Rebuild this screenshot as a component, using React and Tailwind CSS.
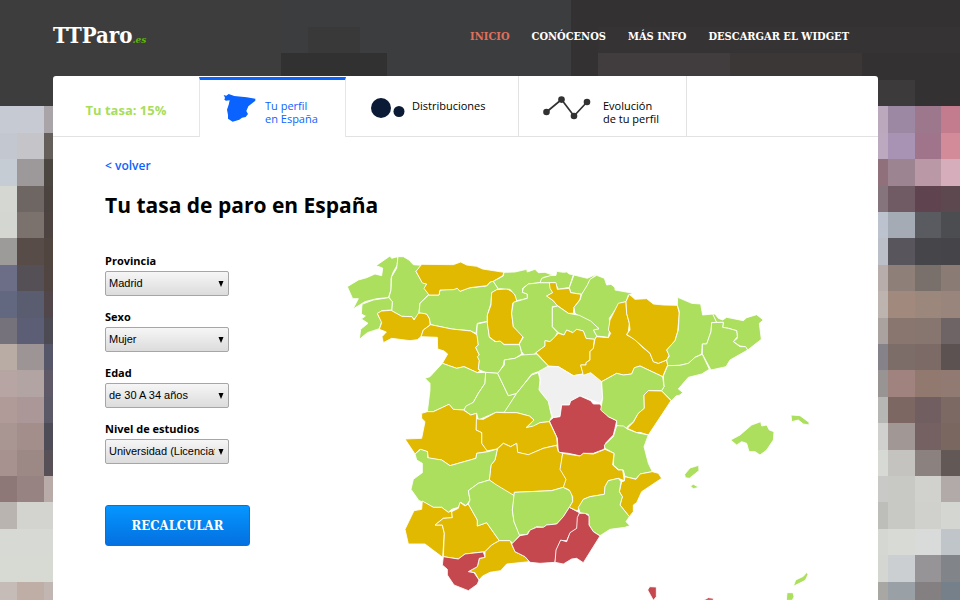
import React from "react";

const GREEN = "#acdf5d";
const GOLD = "#e1b900";
const RED = "#c6484f";
const WHITE = "#f0f0f0";

// Mosaic backdrop: one row of tiles per entry, left to right.
const COLUMNS = [
  [-10, 27],
  [17, 26.5],
  [43.5, 420],
  [460, 428],
  [888, 26.5],
  [914.5, 26.5],
  [941, 27],
];
const MOSAIC = [
  ["#c6cad2", "#c7cad2", "#a8a4a8", "#bba8bd", "#9c88a2", "#9d788c", "#c27c8e"],
  ["#c3c7d0", "#c4c4c9", "#655f5b", "#bca9bf", "#a893b4", "#a0758b", "#d38b9a"],
  ["#c5ccd4", "#9d999a", "#4c4641", "#8f707b", "#9c8491", "#bb98a6", "#d6adba"],
  ["#d5d7d3", "#6e6663", "#4a4340", "#86747d", "#705a63", "#5f444f", "#5d4850"],
  ["#d4d6d2", "#7c726d", "#4d4441", "#bcc3ce", "#a5abb5", "#5a5b61", "#4b4d51"],
  ["#9d9b9a", "#574c47", "#50453f", "#bbbfc8", "#58565c", "#464549", "#454549"],
  ["#6b6e86", "#555056", "#504540", "#b7aeab", "#8e7f78", "#79706b", "#8b7b75"],
  ["#626880", "#5a5c70", "#51464a", "#bdb4b0", "#a1897d", "#9c877c", "#99857b"],
  ["#75727c", "#5b5e74", "#4c4a52", "#a9a29f", "#88766f", "#87766f", "#6e6466"],
  ["#b8aca5", "#9c9495", "#555768", "#85828a", "#7d6d69", "#7c6a67", "#5c5251"],
  ["#b6a5a3", "#b2a4a3", "#5f5967", "#989494", "#a0827f", "#91796f", "#907a72"],
  ["#b09b99", "#ab9698", "#5b5968", "#b6b6b5", "#7c6763", "#715e60", "#7c6963"],
  ["#a99592", "#a48e8b", "#4e4c56", "#d0d1ce", "#a19794", "#756062", "#7a6860"],
  ["#a79290", "#9c8884", "#575056", "#d7d9d4", "#c5c3bf", "#8b827f", "#625856"],
  ["#8d7777", "#978381", "#b8aba8", "#c9cac7", "#c8c8c4", "#d1d2cd", "#b1aaa8"],
  ["#bab4b1", "#d3d4d0", "#d3d4d0", "#bdbdb9", "#c8c8c4", "#d0d0cc", "#d4d6d1"],
  ["#d7d9d4", "#d7d9d4", "#d7d9d4", "#d5d7d2", "#d8dad6", "#d8dbd9", "#bfc5c9"],
  ["#d7d9d3", "#d7d9d3", "#d7d9d3", "#d4d6d1", "#cbcfd2", "#969496", "#818489"],
  ["#c5bcb8", "#bfaea6", "#c2b6b2", "#a8a7a4", "#9aa1a6", "#848081", "#75808a"],
];

function Backdrop() {
  return (
    <svg
      aria-hidden="true"
      className="absolute inset-0 -z-10 h-full w-full"
      viewBox="0 0 960 600"
      preserveAspectRatio="xMidYMin slice"
      shapeRendering="crispEdges"
    >
      {MOSAIC.map((row, r) =>
        row.map((fill, c) => (
          <rect
            key={`${r}-${c}`}
            x={COLUMNS[c][0]}
            y={106.4 + r * 26.4}
            width={COLUMNS[c][1]}
            height={27}
            fill={fill}
          />
        ))
      )}
      <rect width="960" height="106" fill="#3d3d3d" />
      <rect x="281" width="290" height="106" fill="#3c3d3e" />
      <rect x="308" y="27" width="52" height="27" fill="#393939" />
      <rect x="281" y="53" width="106" height="53" fill="#313131" />
      <rect x="571" width="389" height="106" fill="#343132" />
      <rect x="598" y="27" width="362" height="26" fill="#363334" />
      <rect x="598" y="53" width="132" height="53" fill="#413c3d" />
      <rect x="730" y="53" width="132" height="53" fill="#3b3737" />
      <rect x="862" y="80" width="53" height="26" fill="#3d3a3b" />
    </svg>
  );
}

// Province outlines, grouped by map sheet; each sheet has its own origin.
const SHEETS = [
  {
    origin: "translate(1020 720)",
    areas: [
      [GREEN, "22,140 55,120 80,113 105,102 125,107 128,84 108,77 150,48 155,55 173,50 172,75 160,95 153,115 153,150 145,173 110,176 75,185 39,207 55,176 38,176"],
      [GREEN, "174,50 190,50 207,60 220,74 243,76 228,95 247,127 260,130 256,142 266,163 240,190 237,217 235,225 222,238 216,230 185,229 155,212 157,185 147,172 153,150 155,110 170,85"],
      [GREEN, "66,193 100,180 146,173 157,185 155,210 125,212 112,222 125,245 118,266 100,272 82,278 58,298 62,268 84,250 64,237 76,228 64,222"],
      [GOLD, "112,220 125,213 153,211 185,229 216,230 222,240 235,220 245,218 262,223 270,240 270,255 250,270 243,290 232,299 210,302 155,295 130,308 126,290 139,276 118,268 125,248"],
      [GREEN, "240,190 266,165 297,165 300,150 340,147 352,144 360,154 385,144 440,138 453,124 460,124 475,147 455,158 453,190 442,225 442,244 412,250 408,280 390,272 335,267 272,254 268,235 260,222 237,218"],
      [GOLD, "228,94 245,73 340,74 362,66 380,75 410,79 428,87 492,97 488,107 460,124 450,126 440,137 390,143 360,154 352,145 340,149 300,150 297,165 267,165 252,145 260,132 247,129"],
      [GOLD, "243,290 250,270 272,254 335,267 392,273 412,285 415,315 407,322 418,345 415,350 418,362 415,388 420,392 412,398 372,380 350,385 307,370 323,342 312,333 293,327 292,292"],
      [GREEN, "410,280 412,252 442,245 448,292 465,305 480,302 492,314 540,314 545,342 525,355 493,360 490,375 475,400 437,397 418,390 415,385 418,362 412,350 418,345 407,322 415,315"],
      [GOLD, "455,158 470,149 500,146 522,158 530,175 530,182 518,190 515,220 520,260 550,288 538,310 540,313 492,313 480,303 468,305 460,300 448,290 442,250 442,225 453,195"],
    ],
  },
  {
    origin: "translate(1500 750)",
    areas: [
      [GREEN, "-20,94 10,78 12,67 45,66 80,58 82,66 105,58 115,68 135,67 165,78 130,82 120,98 85,102 68,115 68,127 82,132 82,145 50,152 45,135 30,118 0,116 -5,117"],
      [GREEN, "120,98 150,98 155,112 158,128 140,138 160,152 173,168 157,170 157,230 172,248 165,262 150,275 135,272 135,288 108,308 100,315 78,322 65,305 58,282 70,262 40,230 35,190 40,157 82,145 82,132 67,127 70,115 85,102"],
      [GREEN, "120,98 125,85 150,77 168,76 170,64 190,67 200,66 208,72 220,74 208,112 175,118 165,98 150,98"],
      [GREEN, "208,113 222,75 262,85 290,72 270,90 262,110 245,133 212,128"],
      [GOLD, "148,98 168,98 172,118 208,115 212,128 243,133 240,148 222,172 220,190 205,190 170,165 160,152 140,138 158,128 150,115"],
      [GREEN, "245,133 262,105 270,88 290,76 313,85 320,105 333,103 345,113 345,120 400,130 385,135 378,155 360,160 345,180 328,205 330,235 325,262 290,258 280,240 297,236 270,215 237,198 225,190 222,172 240,150"],
      [GREEN, "157,172 173,168 205,190 238,196 272,213 297,236 280,240 290,258 285,268 258,265 250,243 230,238 220,248 200,240 192,255 175,248 157,230"],
      [GOLD, "108,308 135,288 135,272 150,275 175,250 192,255 200,240 218,248 230,238 250,243 258,265 283,268 280,295 270,305 270,330 258,338 258,345 242,345 250,372 220,377 175,350 145,348 118,318"],
      [WHITE, "115,362 130,350 175,350 220,377 272,368 305,393 308,445 300,460 280,452 240,438 212,453 208,465 185,465 180,500 158,503 145,460 117,420 122,390"],
      [RED, "148,513 160,503 180,500 185,465 208,465 212,453 240,438 272,452 280,462 300,462 325,500 350,512 345,535 340,555 318,578 312,598 280,610 250,610 242,618 205,610 175,607 172,565"],
    ],
  },
  {
    origin: "translate(1800 810)",
    areas: [
      [GOLD, "-15,207 -10,200 25,203 32,190 25,180 30,150 55,100 78,95 80,130 88,160 85,185 80,195 105,207 125,230 150,250 160,275 175,280 200,270 203,285 188,320 120,288 103,294 95,312 70,315 50,310 5,335 -28,308 -50,316 -58,285 -42,285 -42,278 -30,270 -30,245 -20,235"],
      [GOLD, "88,73 105,88 140,86 160,102 190,105 232,106 238,130 233,185 225,212 200,240 208,255 200,270 175,280 160,275 150,250 105,210 80,193 90,180 88,160 80,130 78,95"],
      [GREEN, "233,82 275,100 302,102 308,135 340,132 350,157 335,158 333,185 320,222 307,222 305,252 285,262 265,280 240,286 203,287 200,270 208,258 200,240 225,212 235,180 238,125 232,105"],
      [GREEN, "338,132 345,132 355,145 368,150 380,142 430,152 440,143 470,134 490,150 478,160 484,208 443,240 435,230 420,228 400,215 412,205 410,182 385,175 368,172 370,157 350,157"],
      [GREEN, "335,158 370,157 368,172 385,175 410,182 412,200 400,215 420,230 437,230 443,240 390,270 378,290 333,300 307,252 307,222 320,222 333,185"],
      [GREEN, "203,287 240,286 265,280 285,262 307,253 328,298 305,312 265,322 235,357 248,367 240,375 228,378 215,392 185,362 192,350 190,318"],
      [GREEN, "5,335 50,310 70,315 95,312 103,293 120,288 188,320 192,350 185,362 145,362 132,375 133,415 115,430 100,455 82,470 80,475 50,467 50,452 25,440 2,420 8,385"],
      [GOLD, "145,362 185,363 213,392 145,495 120,487 110,488 82,475 100,457 115,430 133,415 132,375"],
      [GREEN, "392,510 420,495 455,465 482,455 485,468 500,465 508,480 522,485 520,510 500,540 480,555 465,545 447,545 440,520 425,515 410,525"],
      [GREEN, "573,435 600,437 627,457 627,465 610,462 595,450 575,455"],
    ],
  },
  {
    origin: "translate(1170 1050)",
    areas: [
      [GREEN, "157,40 200,55 222,50 262,68 287,67 285,100 265,130 250,157 220,180 190,178 177,163 130,185 112,185 120,120 120,100 105,85 120,80"],
      [GREEN, "287,67 323,70 355,137 380,130 345,187 318,187 265,210 260,190 242,195 222,180 228,168 250,157 265,130 285,100"],
      [GREEN, "323,70 343,45 343,30 375,25 395,15 440,12 475,48 445,65 425,72 400,105 380,130 355,137"],
      [GREEN, "380,130 400,105 425,75 445,68 450,90 447,120 475,155 485,200 478,215 450,218 430,230 410,233 432,210 418,198 380,188 342,188"],
      [GOLD, "258,190 262,207 280,208 318,187 345,188 380,188 418,198 432,210 408,233 430,228 450,218 478,215 500,262 502,285 460,295 415,315 382,307 380,280 362,290 340,280 320,297 290,303 275,280 275,248 258,240 258,215"],
      [GOLD, "95,190 112,185 130,185 177,163 190,178 220,180 242,195 260,190 258,240 275,248 275,280 293,305 260,310 258,325 180,347 155,330 115,325 112,305 90,298 75,312 45,267 95,265 105,215 95,205"],
    ],
  },
  {
    origin: "translate(1170 1350)",
    areas: [
      [GOLD, "322,-3 340,-20 362,-10 380,-20 383,7 415,14 460,-5 500,-14 505,5 518,10 512,55 530,90 520,112 485,122 373,127 373,137 345,125 298,90 303,45 315,30"],
      [GREEN, "75,12 92,-2 113,5 113,23 155,30 180,47 258,25 260,10 295,5 322,-3 315,30 303,45 298,90 265,100 235,122 240,150 228,167 212,157 205,172 185,178 175,187 155,172 130,172 102,157 87,152 63,118 70,88 97,68 97,40 80,30"],
      [GOLD, "97,153 130,172 155,172 175,187 185,183 187,203 160,205 135,225 157,225 163,250 158,322 105,282 55,282 45,238 72,182 95,178"],
      [GOLD, "185,185 205,175 210,157 225,168 235,162 262,210 262,228 290,218 328,272 305,285 285,305 225,312 205,327 160,320 163,250 157,225 135,225 160,205 187,203"],
      [GREEN, "298,90 320,105 373,137 372,150 367,180 372,215 390,255 368,280 360,272 328,272 290,218 262,228 262,210 235,162 240,150 235,122 265,100"],
      [GREEN, "373,127 485,122 520,112 545,125 548,155 538,172 520,200 500,222 470,225 460,232 440,230 415,245 413,253 388,255 372,215 367,180"],
      [GOLD, "285,305 305,285 328,272 360,272 375,305 405,320 418,335 350,342 332,362 300,367 278,378 267,390 255,368 235,365 262,350 268,325 285,322"],
      [RED, "538,172 568,188 562,235 540,250 530,272 512,272 500,300 495,337 450,340 420,337 405,320 375,305 365,282 390,257 413,253 420,240 440,232 460,232 470,225 500,222 520,200"],
      [RED, "160,320 205,327 225,312 280,306 285,322 268,325 262,350 235,365 252,368 267,390 262,403 235,422 192,405 172,375 172,358 157,345"],
    ],
  },
  {
    origin: "translate(1620 1290)",
    areas: [
      [GREEN, "230,-13 250,-12 262,-3 290,8 325,15 312,50 325,100 337,125 300,132 288,147 255,140 250,120 235,118 220,105 222,70 195,55 193,45 220,20"],
      [GOLD, "68,70 120,78 130,70 160,72 195,58 222,70 218,105 235,120 248,120 253,152 235,145 205,152 195,170 193,193 150,200 130,208 115,238 112,243 88,232 98,215 98,200 88,180 70,172 78,148 60,118"],
      [GOLD, "245,155 253,153 255,140 288,148 300,132 337,125 355,130 365,145 305,185 290,218 280,225 280,245 268,260 240,225 247,200 238,185"],
      [GREEN, "205,152 235,145 243,155 238,185 247,200 240,225 268,260 258,275 270,287 255,292 210,298 180,317 160,305 147,285 145,253 120,248 115,232 130,208 150,200 193,193 195,170"],
      [RED, "118,250 135,250 147,258 147,285 160,305 180,318 130,398 110,385 95,387 70,402 45,397 48,360 62,330 80,335 90,308 110,295 112,262"],
      [GREEN, "434,133 450,114 476,106 477,122 448,145 436,143"],
      [GREEN, "451,168 460,163 477,172 460,176"],
      [RED, "323,480 329,470 349,471 349,500 340,511"],
      [RED, "490,511 505,503 520,505 520,511"],
      [GREEN, "739,511 741,488 759,488 762,500 757,511"],
      [GREEN, "760,469 767,450 790,439 800,427 804,434 796,451"],
    ],
  },
];

function SpainMap() {
  return (
    <svg
      role="img"
      aria-label="Tasa de paro por provincia"
      className="block w-full max-w-[480px]"
      viewBox="1020 720 1440 1080"
    >
      {SHEETS.map((sheet) => (
        <g key={sheet.origin} transform={sheet.origin}>
          {sheet.areas.map(([fill, points]) => (
            <polygon
              key={points}
              points={points}
              fill={fill}
              stroke="#fff"
              strokeWidth="2.6"
              strokeLinejoin="round"
            />
          ))}
        </g>
      ))}
    </svg>
  );
}

function SelectField({ id, label, options }) {
  return (
    <div className="flex flex-col">
      <label htmlFor={id} className="h-[17px] text-[11px] leading-[14px] font-bold text-black">
        {label}
      </label>
      <div className="relative">
        <select
          id={id}
          className="block h-[25px] w-full appearance-none rounded-[2px] border border-[#a6a6a6] bg-linear-to-b from-[#f6f6f6] to-[#dcdcdc] pr-[13px] pl-[3px] font-['Liberation_Sans',Arial,sans-serif] text-[11px] text-black"
        >
          {options.map((o) => (
            <option key={o}>{o}</option>
          ))}
        </select>
        <svg
          aria-hidden="true"
          className="pointer-events-none absolute top-[10px] right-[5px] h-[6px] w-[6px]"
          viewBox="0 0 6 6"
        >
          <path d="M0.500 0H5.500L3 6Z" fill="#000" />
        </svg>
      </div>
    </div>
  );
}

const FIELDS = [
  { id: "provincia", label: "Provincia", options: ["Madrid", "Barcelona", "Sevilla"] },
  { id: "sexo", label: "Sexo", options: ["Mujer", "Hombre"] },
  { id: "edad", label: "Edad", options: ["de 30 A 34 años", "de 35 A 39 años"] },
  {
    id: "estudios",
    label: "Nivel de estudios",
    options: ["Universidad (Licenciatura)", "Bachillerato"],
  },
];

export default function App() {
  return (
    <div className="relative isolate flex min-h-screen flex-col overflow-hidden pr-[82px] pl-[53px] font-['Open_Sans','Noto_Sans',sans-serif] text-black">
      <Backdrop />
      <header className="flex h-[76px] items-center justify-between pr-[29px] pb-[2px] font-['DejaVu_Serif_Condensed','DejaVu_Serif',serif] font-bold">
        <a href="#inicio" className="flex items-baseline text-[22px] leading-7 text-white">
          TTParo
          <span className="text-[10px] text-[#5fb60a] italic">.es</span>
        </a>
        <nav className="flex gap-[22px] text-[11px] leading-4 whitespace-nowrap text-white">
          <a href="#inicio" className="text-[#e0705c]">INICIO</a>
          <a href="#conocenos">CONÓCENOS</a>
          <a href="#info">MÁS INFO</a>
          <a href="#widget">DESCARGAR EL WIDGET</a>
        </nav>
      </header>

      <main className="flex flex-1 flex-col rounded-t-[3px] bg-white">
        <nav className="flex h-[61px] text-[11px] leading-[13px]">
          <div className="flex w-[146px] items-center justify-center border-b border-[#e2e2e2] pt-[9px] text-[13px] font-bold text-[#a9dd5a]">
            Tu tasa: 15%
          </div>
          <a
            href="#perfil"
            className="mt-px flex w-[147px] gap-2 border-x border-t-3 border-x-[#e6e6e6] border-t-[#0b63ff] pt-[13px] pl-[23px] text-[#0b63ff]"
          >
            <svg aria-hidden="true" className="h-[30px] w-[34px]" viewBox="671 280 102 90">
              <path
                d="M673 286L681 288L688 283L705 289L742 293L768 297L768 303L747 320L741 334L746 343L739 352L728 354L720 360L700 366L693 362L686 357L686 346L683 330L688 315L691 302L680 303L675 300L677 294Z"
                fill="#0b63ff"
              />
            </svg>
            <span className="pt-[6px]">
              Tu perfil
              <br />
              en España
            </span>
          </a>
          <a
            href="#distribuciones"
            className="flex w-[173px] gap-[7px] border-r border-b border-[#e2e2e2] pt-[20px] pl-[24px]"
          >
            <svg aria-hidden="true" className="h-[24px] w-[35px]" viewBox="0 0 35 24">
              <circle cx="11" cy="12" r="10" fill="#0b1b36" />
              <circle cx="29" cy="15.500" r="5.500" fill="#0b1b36" />
            </svg>
            <span className="pt-[3px]">Distribuciones</span>
          </a>
          <a
            href="#evolucion"
            className="flex w-[168px] gap-[11px] border-r border-b border-[#e2e2e2] pt-[20px] pl-[23px]"
          >
            <svg aria-hidden="true" className="h-[24px] w-[50px]" viewBox="0 0 50 24">
              <path d="M4.500 16L19.500 3.500L32 20L45 6" fill="none" stroke="#323232" strokeWidth="1.700" />
              <circle cx="4.500" cy="16" r="3.300" fill="#323232" />
              <circle cx="19.500" cy="3.600" r="3.300" fill="#323232" />
              <circle cx="32" cy="20" r="3.300" fill="#323232" />
              <circle cx="45" cy="6" r="3.300" fill="#323232" />
            </svg>
            <span className="pt-[3px]">
              Evolución
              <br />
              de tu perfil
            </span>
          </a>
          <div className="flex-1 border-b border-[#e2e2e2]" />
        </nav>

        <div className="flex flex-1 pl-[52px]">
          <div className="flex-none">
            <a
              href="#volver"
              className="mt-[20px] block text-[12px] leading-[18px] font-semibold text-[#0b63ff]"
            >
              &lt; volver
            </a>
            <h1 className="mt-[16px] h-[63px] w-[235px] text-[21px] leading-[28px] font-bold whitespace-nowrap">
              Tu tasa de paro en España
            </h1>
            <form onSubmit={(e) => e.preventDefault()} className="flex w-[145px] flex-col">
              <div className="flex w-[124px] flex-col gap-[14px]">
                {FIELDS.map((f) => (
                  <SelectField key={f.id} {...f} />
                ))}
              </div>
              <button
                type="submit"
                className="mt-[41px] h-[41px] rounded-[3px] border border-[#0b6fe4] bg-linear-to-b from-[#0696ff] to-[#0570e0] font-['DejaVu_Serif_Condensed','DejaVu_Serif',serif] text-[13px] font-bold text-white"
              >
                RECALCULAR
              </button>
            </form>
          </div>
          <div className="min-w-0 flex-1 pt-[103px]">
            <SpainMap />
          </div>
        </div>
      </main>
    </div>
  );
}
